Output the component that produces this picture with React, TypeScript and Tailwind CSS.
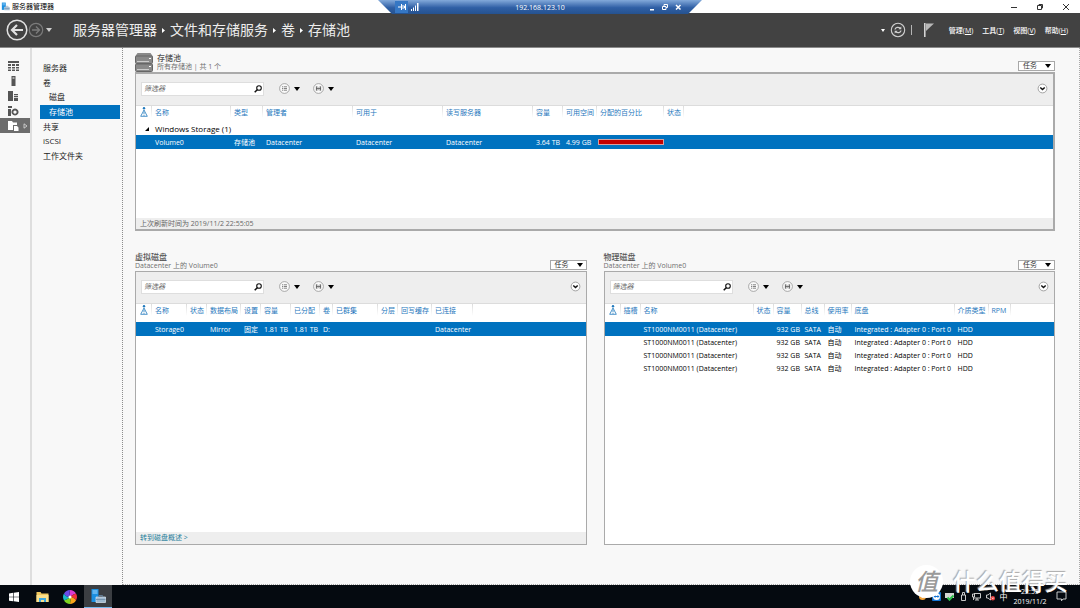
import React, { useState } from 'react';

type Cell = React.ReactNode;

type Column = {
  title: string;
  width: string;
};

const poolColumns: Column[] = [
  { title: '名称', width: 'w-[79px]' },
  { title: '类型', width: 'w-[32px]' },
  { title: '管理者', width: 'w-[90px]' },
  { title: '可用于', width: 'w-[90px]' },
  { title: '读写服务器', width: 'w-[90px]' },
  { title: '容量', width: 'w-[30px]' },
  { title: '可用空间', width: 'w-[34px]' },
  { title: '分配的百分比', width: 'w-[67px]' },
  { title: '状态', width: 'w-[20px]' },
];

const virtualColumns: Column[] = [
  { title: '名称', width: 'w-[35px]' },
  { title: '状态', width: 'w-[20px]' },
  { title: '数据布局', width: 'w-[34px]' },
  { title: '设置', width: 'w-[20px]' },
  { title: '容量', width: 'w-[30px]' },
  { title: '已分配', width: 'w-[29px]' },
  { title: '卷', width: 'w-[13px]' },
  { title: '已群集', width: 'w-[45px]' },
  { title: '分层', width: 'w-[20px]' },
  { title: '回写缓存', width: 'w-[34px]' },
  { title: '已连接', width: 'w-[41px]' },
];

const physicalColumns: Column[] = [
  { title: '插槽', width: 'w-[20px]' },
  { title: '名称', width: 'w-[113px]' },
  { title: '状态', width: 'w-[20px]' },
  { title: '容量', width: 'w-[28px]' },
  { title: '总线', width: 'w-[23px]' },
  { title: '使用率', width: 'w-[27px]' },
  { title: '底盘', width: 'w-[103px]' },
  { title: '介质类型', width: 'w-[34px]' },
  { title: 'RPM', width: 'w-[22px]' },
];

const physicalRow: Cell[] = [
  '', 'ST1000NM0011 (Datacenter)', '', '932 GB', 'SATA', '自动',
  'Integrated : Adapter 0 : Port 0', 'HDD', '',
];

const navItems = [
  { label: '服务器', sub: false },
  { label: '卷', sub: false },
  { label: '磁盘', sub: true },
  { label: '存储池', sub: true },
  { label: '共享', sub: false },
  { label: 'iSCSI', sub: false },
  { label: '工作文件夹', sub: false },
];

const menus = [
  { label: '管理', hotkey: 'M' },
  { label: '工具', hotkey: 'T' },
  { label: '视图', hotkey: 'V' },
  { label: '帮助', hotkey: 'H' },
];

const Caret = ({ className = '' }: { className?: string }) => (
  <svg className={className} width="6" height="4" viewBox="0 0 6 4" fill="currentColor">
    <path d="M0 0h6L3 4z" />
  </svg>
);

const ServerManagerIcon = ({ size }: { size: number }) => (
  <svg width={size} height={size} viewBox="0 0 16 16">
    <path d="M1.500 1h7v13h-7z" fill="#1b8fe0" />
    <path d="M2.500 3h5M2.500 5h5" stroke="#a9dcff" strokeWidth="1" />
    <path d="M6 9h9.500v5.500H6z" fill="#9fb9cf" stroke="#dbe8f2" strokeWidth=".7" />
    <path d="M9 9V7.500h3.500V9M6 11.500h9.500" stroke="#6d8ba6" strokeWidth=".8" fill="none" />
  </svg>
);

function TitleBar() {
  return (
    <div className="flex h-[13px] shrink-0 items-center justify-between bg-white pl-px">
      <div className="flex items-center gap-[2px] text-[7px] leading-[9px] text-black">
        <ServerManagerIcon size={9} />
        <span>服务器管理器</span>
      </div>
      <div className="flex items-center gap-[18px] pr-[10px] text-[#333]">
        <button aria-label="最小化">
          <svg width="8" height="8" viewBox="0 0 8 8" stroke="currentColor"><path d="M1 4.500h6" /></svg>
        </button>
        <button aria-label="还原">
          <svg width="8" height="8" viewBox="0 0 8 8" stroke="currentColor" fill="none">
            <path d="M1.500 2.500h4v4h-4zM3 2.500v-1h3.500V5H5.500" />
          </svg>
        </button>
        <button aria-label="关闭">
          <svg width="8" height="8" viewBox="0 0 8 8" stroke="currentColor"><path d="M1 1l6 6M7 1L1 7" /></svg>
        </button>
      </div>
    </div>
  );
}

// 远程桌面连接栏
function ConnectionBar() {
  return (
    <div className="absolute top-0 left-1/2 flex h-[14px] w-[324px] -translate-x-1/2 items-center justify-between bg-[linear-gradient(#82a9da,#2f5fa5_55%,#25528f)] px-[17px] text-white [clip-path:polygon(0_0,100%_0,calc(100%-14px)_100%,14px_100%)]">
      <div className="flex h-full w-[60px] items-center">
        <button aria-label="固定" className="flex h-[12px] w-[13px] items-center justify-center bg-[#3577c4]">
          <svg width="8" height="6" viewBox="0 0 8 6" stroke="white" fill="none">
            <path d="M0 3h3M3.500 0v6M3.500 2h3v2h-3M7.500 0v6" />
          </svg>
        </button>
        <svg className="ml-[3px]" width="8" height="8" viewBox="0 0 8 8" fill="white">
          <path d="M0 6h1v2H0zM2 4.500h1V8H2zM4 2.500h1V8H4zM6 0h1.500v8H6z" />
        </svg>
      </div>
      <span className="text-[7px] leading-[9px]">192.168.123.10</span>
      <div className="flex w-[60px] items-center justify-end gap-[5px] pr-[3px]">
        <button aria-label="最小化连接">
          <svg width="8" height="8" viewBox="0 0 8 8"><path d="M2 6h4v1.500H2z" fill="white" /></svg>
        </button>
        <button aria-label="还原连接">
          <svg width="8" height="8" viewBox="0 0 8 8" stroke="white" fill="none">
            <path d="M1.500 3.500h3.500v3H1.500zM3 3V1.500h3.500v3H5" />
          </svg>
        </button>
        <button aria-label="断开连接">
          <svg width="8" height="8" viewBox="0 0 8 8" stroke="white" strokeWidth="1.500"><path d="M2 2l4.500 4.500M6.500 2L2 6.500" /></svg>
        </button>
      </div>
    </div>
  );
}

function Header() {
  const crumbs = ['服务器管理器', '文件和存储服务', '卷', '存储池'];
  return (
    <header className="flex h-[35px] shrink-0 items-center justify-between border-b border-[#8a8a8a] bg-[#424242] pr-[12px] pl-[6px] text-white">
      <div className="flex items-center">
        <button aria-label="后退">
          <svg width="22" height="22" viewBox="0 0 22 22" fill="none" stroke="#e0e0e0">
            <circle cx="11" cy="11" r="9.800" strokeWidth="1.500" />
            <path d="M17 11H6.500M11 6l-5 5 5 5" strokeWidth="2.200" />
          </svg>
        </button>
        <button aria-label="前进">
          <svg width="16" height="16" viewBox="0 0 16 16" fill="none" stroke="#7b7b7b">
            <circle cx="8" cy="8" r="6.700" strokeWidth="1.200" />
            <path d="M4 8h7M8 4.500L11.500 8 8 11.500" strokeWidth="1.400" />
          </svg>
        </button>
        <Caret className="ml-[2px] text-[#cfcfcf]" />
        <nav className="ml-[21px] flex text-[14px] leading-[20px] text-[#ededed]">
          {crumbs.map((crumb, i) => (
            <React.Fragment key={crumb}>
              {i > 0 && (
                <span className="flex w-[13px] items-center justify-center">
                  <svg width="3" height="5" viewBox="0 0 3 5" fill="white"><path d="M0 0l3 2.500L0 5z" /></svg>
                </span>
              )}
              <a href="#">{crumb}</a>
            </React.Fragment>
          ))}
        </nav>
      </div>
      <div className="flex items-center text-[7px] leading-[9px]">
        <svg width="4" height="3" viewBox="0 0 4 3" fill="white"><path d="M0 0h4L2 3z" /></svg>
        <button aria-label="刷新" className="ml-[5px]">
          <svg width="16" height="16" viewBox="0 0 16 16" fill="none" stroke="#d0d0d0">
            <circle cx="8" cy="8" r="6.700" strokeWidth="1.100" />
            <path d="M5 7.500C5.300 5.300 8.500 4.500 10.300 6.500M11 8.500c-.3 2.200-3.500 3-5.300 1" strokeWidth="1.300" />
            <path d="M11.300 4.500v2.800H8.500zM4.700 11.500V8.700h2.800z" fill="#d0d0d0" stroke="none" />
          </svg>
        </button>
        <span className="ml-[5px] h-[10px] w-px bg-[#b5b5b5]" />
        <button aria-label="通知" className="ml-[12px]">
          <svg width="10" height="14" viewBox="0 0 10 14">
            <path d="M.8 0v14" stroke="#dcdcdc" strokeWidth="1.500" />
            <path d="M2 .5h8L2 8z" fill="#b9b9b9" />
          </svg>
        </button>
        <nav className="ml-[15px] flex gap-[9px] font-medium">
          {menus.map((m) => (
            <button key={m.hotkey} className="whitespace-nowrap">
              {m.label}(<u>{m.hotkey}</u>)
            </button>
          ))}
        </nav>
      </div>
    </header>
  );
}

function Rail() {
  const icons = [
    <path key="0" d="M0 0h11v2H0zM0 3h3v2H0zM4 3h3v2H4zM8 3h3v2H8zM0 6h3v1.500H0zM4 6h3v1.500H4zM8 6h3v1.500H8zM0 8.500h3V10H0zM4 8.500h3V10H4zM8 8.500h3V10H8z" />,
    <path key="1" fillRule="evenodd" d="M3.500 0h4v10h-4zM4.500 1.500v1h2v-1z" />,
    <path key="2" d="M0 0h5v10H0zM6 3h4v1.200H6zM6 5h4v1.200H6zM6 7h4v3H6z" />,
    <path key="3" fillRule="evenodd" d="M0 0h4v2H0zM0 3h3v7H0zM7 2.500a3.500 3.500 0 1 0 .01 0zM7 4.500a1.600 1.600 0 1 1-.01 0z" />,
    <path key="4" d="M0 0h4l1 1.500h4V4H5v5H0zM6 5h3l1.500 1.500V10H6z" />,
  ];
  return (
    <nav className="grid h-[85px] w-[30px] shrink-0 auto-rows-fr pt-[11px]">
      {icons.map((icon, i) => (
        <button
          key={i}
          aria-label={`视图 ${i + 1}`}
          className={
            i === 4
              ? 'flex items-center justify-between bg-[#6d6d6d] pr-[2px] pl-[8px] text-white'
              : 'flex items-center pl-[8px] text-[#555]'
          }
        >
          <svg width="11" height="10" viewBox="0 0 11 10" fill="currentColor">{icon}</svg>
          {i === 4 && (
            <svg width="5" height="6" viewBox="0 0 5 6" fill="none" stroke="#ddd"><path d="M1 .8L4 3 1 5.200z" strokeWidth=".8" /></svg>
          )}
        </button>
      ))}
    </nav>
  );
}

function SideNav() {
  return (
    <nav className="w-[93px] shrink-0 border-r border-l-2 border-l-[#dedede] [border-right-style:dotted] border-r-[#8d8d8d] pt-[13px] pr-[2px] pl-[8px]">
      <ul className="grid h-[102px] auto-rows-fr text-[8px] leading-[10px]">
        {navItems.map((item) => (
          <li
            key={item.label}
            className={`flex items-center ${item.sub ? 'pl-[9px]' : 'pl-[3px]'} ${
              item.label === '存储池' ? 'bg-[#0072bf] text-white' : 'text-[#222]'
            }`}
          >
            <a href="#">{item.label}</a>
          </li>
        ))}
      </ul>
    </nav>
  );
}

function TaskButton() {
  return (
    <button
      aria-haspopup="menu"
      className="flex h-[10px] w-[37px] items-center justify-between border border-[#a8a8a8] bg-white pr-[3px] pl-[4px] text-[7px] leading-[8px] text-[#333]"
    >
      任务
      <Caret className="text-black" />
    </button>
  );
}

function PanelTitle({ title, subtitle, icon }: { title: string; subtitle: string; icon?: React.ReactNode }) {
  return (
    <div className="flex h-[19px] shrink-0 items-end justify-between">
      <div className="flex h-full gap-[4px]">
        {icon}
        <div>
          <h2 className="text-[8px] leading-[9px] font-medium text-[#555]">{title}</h2>
          <p className="text-[7px] leading-[9px] text-[#6f6f6f]">{subtitle}</p>
        </div>
      </div>
      <div className="pb-px">
        <TaskButton />
      </div>
    </div>
  );
}

function Toolbar() {
  const [filter, setFilter] = useState('');
  return (
    <div className="flex h-[32px] shrink-0 items-center border-b border-[#dcdcdc] bg-[#eeeeee] pr-[5px] pb-[2px] pl-[5px]">
      <div className="flex h-[14px] w-[123px] items-center border border-[#dedede] bg-white pr-px pl-[2px]">
        <input
          aria-label="筛选器"
          className="min-w-0 flex-1 text-[7px] leading-[10px] text-black italic outline-none placeholder:text-[#666]"
          placeholder="筛选器"
          value={filter}
          onChange={(e) => setFilter(e.target.value)}
        />
        <svg width="8" height="8" viewBox="0 0 8 8" fill="none" stroke="#111">
          <circle cx="5" cy="3" r="2.300" strokeWidth="1.100" />
          <path d="M3.200 4.800L.7 7.300" strokeWidth="1.500" />
        </svg>
      </div>
      <button aria-label="筛选条件" className="ml-[15px] flex items-center gap-[4px]">
        <svg width="11" height="11" viewBox="0 0 11 11" fill="none" stroke="#888">
          <circle cx="5.500" cy="5.500" r="4.900" fill="#fafafa" strokeWidth=".7" />
          <path d="M3 3.800h1M4.700 3.800H8M3 5.500h1M4.700 5.500H8M3 7.200h1M4.700 7.200H8" stroke="#666" strokeWidth=".8" />
        </svg>
        <Caret />
      </button>
      <button aria-label="保存查询" className="ml-[13px] flex items-center gap-[4px]">
        <svg width="11" height="11" viewBox="0 0 11 11" fill="none" stroke="#888">
          <circle cx="5.500" cy="5.500" r="4.900" fill="#fafafa" strokeWidth=".7" />
          <path d="M3.400 3.300v4.400M7.600 3.300v4.400M3.400 5.600h4.200" stroke="#555" strokeWidth=".9" />
          <path d="M4.600 3.300v1.500h1.800V3.300M4.600 7.700V6.600h1.800v1.100" stroke="#888" strokeWidth=".5" />
        </svg>
        <Caret />
      </button>
      <button aria-label="展开" className="ml-auto">
        <svg width="11" height="11" viewBox="0 0 11 11" fill="none" stroke="#999">
          <circle cx="5.500" cy="5.500" r="4.400" fill="white" strokeWidth=".9" />
          <path d="M3.300 4.500l2.200 2 2.200-2" stroke="#111" strokeWidth="1.500" />
        </svg>
      </button>
    </div>
  );
}

function DataTable({ columns, rows, group }: { columns: Column[]; rows: Cell[][]; group?: string }) {
  return (
    <table className="w-full table-fixed border-collapse text-left text-[7px] leading-[9px] whitespace-nowrap">
      <thead>
        <tr className="h-[18px] text-[#1f78bd]">
          <th className="w-[15px] p-0 pt-px pl-[4px] align-top">
            <svg width="8" height="10" viewBox="0 0 8 10" fill="none" stroke="#1f78bd">
              <circle cx="4" cy="1.200" r="1.200" fill="#1f78bd" stroke="none" />
              <path d="M4 3L.7 9.300h6.600zM4 4.800v2.500M4 8v.8" strokeWidth=".8" />
            </svg>
          </th>
          {columns.map((col) => (
            <th
              key={col.title}
              className={`${col.width} bg-[linear-gradient(#dcdcdc,#ffffff)] bg-[length:1px_12px] bg-no-repeat p-0 pt-[2px] pl-[4px] align-top font-normal`}
            >
              {col.title}
            </th>
          ))}
          <th className="bg-[linear-gradient(#dcdcdc,#ffffff)] bg-[length:1px_12px] bg-no-repeat p-0" />
        </tr>
      </thead>
      <tbody>
        {group && (
          <tr className="h-[11px] text-[8px] leading-[10px] text-black">
            <td className="p-0 pl-[9px] align-top">
              <svg className="mt-[3px]" width="4" height="4" viewBox="0 0 4 4"><path d="M4 0v4H0z" /></svg>
            </td>
            <td className="p-0 pl-[4px] align-top" colSpan={columns.length + 1}>{group}</td>
          </tr>
        )}
        {rows.map((row, i) => (
          <tr key={i} className={i === 0 ? 'h-[14px] bg-[#0072bf] text-white' : 'h-[13px] text-black'}>
            <td className="p-0" />
            {row.map((cell, j) => (
              <td key={j} className="p-0 pl-[4px]">{cell}</td>
            ))}
            <td className="p-0" />
          </tr>
        ))}
      </tbody>
    </table>
  );
}

function Taskbar() {
  return (
    <footer className="flex h-[23px] shrink-0 items-center justify-between bg-[#050a10] text-white">
      <div className="flex h-full">
        <button aria-label="开始" className="flex w-[28px] items-center justify-center">
          <svg width="10" height="10" viewBox="0 0 10 10" fill="white">
            <path d="M0 1.400l4.200-.6v4H0zM4.800.7L10 0v4.800H4.800zM0 5.300h4.200v4L0 8.700zM4.800 5.300H10V10l-5.200-.7z" />
          </svg>
        </button>
        <button aria-label="文件资源管理器" className="flex w-[28px] items-center justify-center">
          <svg width="13" height="12" viewBox="0 0 13 12">
            <path d="M.5 1h4l1 1.500h7V11H.5z" fill="#f0c75e" />
            <path d="M.5 4h12v7H.5z" fill="#fbe08c" />
            <path d="M3 11V7h7v4H8V9H5v2z" fill="#3fa9e0" />
          </svg>
        </button>
        <button aria-label="浏览器" className="flex w-[28px] items-center justify-center">
          <svg width="14" height="14" viewBox="-7 -7 14 14">
            <path d="M0 0Q-1-4 0-7A7 7 0 0 1 6-3.500Q3-3 0 0" fill="#d93bd0" />
            <path d="M0 0Q3-3 6-3.500A7 7 0 0 1 6 3.500Q4 0 0 0" fill="#f0323c" />
            <path d="M0 0Q4 0 6 3.500A7 7 0 0 1 0 7Q1 3 0 0" fill="#f9a51a" />
            <path d="M0 0Q1 3 0 7A7 7 0 0 1-6 3.500Q-3 3 0 0" fill="#7fd321" />
            <path d="M0 0Q-3 3-6 3.500A7 7 0 0 1-6-3.500Q-4 0 0 0" fill="#19b8c9" />
            <path d="M0 0Q-4 0-6-3.500A7 7 0 0 1 0-7Q-1-4 0 0" fill="#6a4be8" />
            <circle r="1.500" fill="white" />
          </svg>
        </button>
        <button aria-label="服务器管理器" className="flex w-[28px] items-center justify-center border-b border-[#76b9ed] bg-[#3b3e42]">
          <ServerManagerIcon size={16} />
        </button>
      </div>
      <div className="flex items-center pr-[13px] text-[7px]">
        <div className="flex w-[90px] items-center justify-between">
          <svg width="9" height="9" viewBox="0 0 9 9"><circle cx="4.500" cy="4.500" r="3.500" fill="#f2a33a" /><path d="M3 4l1.500 2L8 2" stroke="white" fill="none" /></svg>
          <svg width="9" height="9" viewBox="0 0 9 9"><rect width="9" height="9" rx="1" fill="#1475d4" /><circle cx="4.500" cy="4.500" r="3.500" fill="white" /><path d="M1.500 4.500L3.500 3v1h2V3l2 1.500-2 1.500V5h-2v1z" fill="#1475d4" /></svg>
          <svg width="9" height="9" viewBox="0 0 9 9"><path d="M0 1h9v5H0z" fill="#d5d5d5" /><path d="M2.500 5.500l2 2.200L8.500 3.500" stroke="#2fc04b" strokeWidth="2" fill="none" /></svg>
          <svg width="9" height="9" viewBox="0 0 9 9" fill="none" stroke="#ddd"><path d="M2.500 3h4v5.500h-4zM3.500 3V.5h2V3" strokeWidth=".9" /></svg>
          <svg width="9" height="9" viewBox="0 0 9 9" fill="none" stroke="#ddd"><path d="M2 1.500h6.500v4.500H2M5 6v2M3 8h4M.5 2v3h2V2zM1.500 5v3" strokeWidth=".9" /></svg>
          <svg width="9" height="9" viewBox="0 0 9 9" fill="none"><path d="M.5 3h1.500l2.500-2v7L2 6H.5z" stroke="#ddd" strokeWidth=".9" /><circle cx="6.800" cy="6.300" r="2.200" fill="#e8403f" /><path d="M6 5.500l1.600 1.600M7.600 5.500L6 7.100" stroke="white" strokeWidth=".6" /></svg>
          <span className="w-[9px] text-center text-[8px] leading-[10px]">中</span>
        </div>
        <div className="ml-[5px] w-[34px] text-center leading-[10px]">
          <div>22:55</div>
          <div>2019/11/2</div>
        </div>
        <button aria-label="通知中心" className="ml-[9px]">
          <svg width="11" height="11" viewBox="0 0 11 11" fill="none" stroke="#ddd"><path d="M1 1h9v7H7L5.500 9.800V8H1z" strokeWidth=".9" /></svg>
        </button>
      </div>
    </footer>
  );
}

// 右下角水印
function Watermark() {
  return (
    <div className="pointer-events-none absolute right-[12px] bottom-[10px] flex items-center gap-[10px]">
      <span className="flex h-[33px] w-[33px] items-center justify-center rounded-full bg-white text-[23px] leading-[33px] font-medium text-[#9a9a9a] italic">
        值
      </span>
      <span className="text-[23px] leading-[33px] font-medium text-white [text-shadow:-1px_-1px_1px_#aaa]">什么值得买</span>
    </div>
  );
}

export default function App() {
  return (
    <div className="relative flex h-screen flex-col overflow-hidden bg-[#f8f8f8] font-['Open_Sans','Noto_Sans_CJK_SC',sans-serif]">
      <TitleBar />
      <ConnectionBar />
      <Header />
      <div className="flex min-h-0 flex-1">
        <Rail />
        <SideNav />
        <main className="flex min-w-0 flex-1 flex-col border-r border-b border-dotted border-[#aaa] pt-[5px] pr-[24px] pb-[39px] pl-[12px]">
          <PanelTitle
            title="存储池"
            subtitle="所有存储池 | 共 1 个"
            icon={
              <svg width="18" height="19" viewBox="0 0 18 19">
                <path d="M2.500 0h13L18 3.500H0z" fill="#8a8a8a" />
                <rect x=".5" y="3" width="17" height="7.500" rx="1" fill="#8a8a8a" stroke="#666" />
                <rect x=".5" y="11" width="17" height="7.500" rx="1" fill="#8a8a8a" stroke="#666" />
                <path d="M2 8.500h12M2 16.500h12" stroke="#ddd" strokeWidth=".8" />
                <path d="M14 5.500h2M14 13.500h2" stroke="#fff" />
              </svg>
            }
          />
          <section className="flex h-[159px] shrink-0 flex-col border-2 border-l border-[#aaa] bg-white">
            <Toolbar />
            <DataTable
              columns={poolColumns}
              group="Windows Storage (1)"
              rows={[[
                'Volume0', '存储池', 'Datacenter', 'Datacenter', 'Datacenter', '3.64 TB', '4.99 GB',
                <div key="bar" className="-ml-[2px] h-[6px] w-[66px] border border-[#d8a0a0] bg-[#c40000]" />,
                '',
              ]]}
            />
            <p className="mt-auto bg-[#eeeeee] pl-[4px] text-[7px] leading-[11px] text-[#666]">
              上次刷新时间为 2019/11/2 22:55:05
            </p>
          </section>
          <div className="mt-[21px] grid min-h-0 flex-1 grid-cols-2 gap-[17px]">
            <div className="flex min-w-0 flex-col">
              <PanelTitle title="虚拟磁盘" subtitle="Datacenter 上的 Volume0" />
              <section className="flex flex-1 flex-col border border-[#aaa] bg-white">
                <Toolbar />
                <DataTable
                  columns={virtualColumns}
                  rows={[['Storage0', '', 'Mirror', '固定', '1.81 TB', '1.81 TB', 'D:', '', '', '', 'Datacenter']]}
                />
                <p className="mt-auto bg-[#eeeeee] pl-[4px] text-[7px] leading-[12px] text-[#1f7f9c]">
                  <a href="#">转到磁盘概述 &gt;</a>
                </p>
              </section>
            </div>
            <div className="flex min-w-0 flex-col">
              <PanelTitle title="物理磁盘" subtitle="Datacenter 上的 Volume0" />
              <section className="flex flex-1 flex-col border border-[#aaa] bg-white">
                <Toolbar />
                <DataTable columns={physicalColumns} rows={[physicalRow, physicalRow, physicalRow, physicalRow]} />
              </section>
            </div>
          </div>
        </main>
      </div>
      <Taskbar />
      <Watermark />
    </div>
  );
}
